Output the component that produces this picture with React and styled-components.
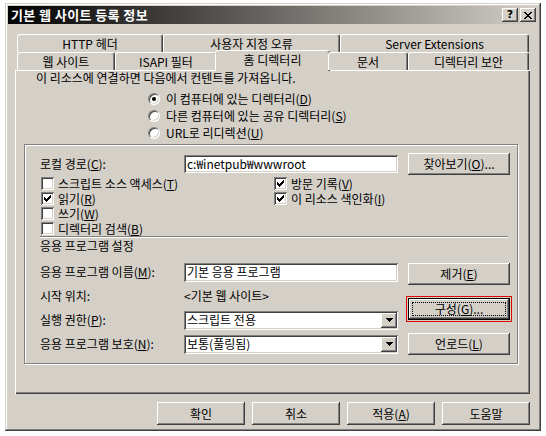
import React from "react";
import styled, { createGlobalStyle, css } from "styled-components";

const FACE = "#d4d0c8";

const GlobalStyle = createGlobalStyle`
  html, body {
    margin: 0;
    background: #fff;
  }
  body {
    font-family: "Noto Sans CJK KR", "Noto Sans", sans-serif;
    font-size: 12px;
    color: #000;
  }
`;

// classic 3d borders
const raised = css`
  box-shadow: inset -1px -1px #404040, inset 1px 1px #fff,
    inset -2px -2px #808080, inset 2px 2px ${FACE};
`;

const sunken = css`
  box-shadow: inset 1px 1px #808080, inset -1px -1px #fff,
    inset 2px 2px #404040, inset -2px -2px ${FACE};
`;

const Window = styled.div`
  margin: 3px 0 0 5px;
  width: 536px;
  height: 428px;
  box-sizing: border-box;
  padding: 3px;
  background: ${FACE};
  box-shadow: inset -1px -1px #404040, inset 1px 1px ${FACE},
    inset -2px -2px #808080, inset 2px 2px #fff;
  display: flex;
  flex-direction: column;
`;

const TitleBar = styled.div`
  height: 18px;
  display: flex;
  align-items: center;
  padding: 0 2px 0 3px;
  background: linear-gradient(90deg, #000 0%, #d4d0c8 100%);
`;

const Title = styled.div`
  flex: 1;
  color: #fff;
  font-weight: bold;
  font-size: 13px;
  line-height: 18px;
  letter-spacing: 0.4px;
`;

const CaptionButton = styled.div`
  width: 16px;
  height: 14px;
  box-sizing: border-box;
  background: ${FACE};
  ${raised};
  display: flex;
  align-items: center;
  justify-content: center;
  font-family: "DejaVu Sans", sans-serif;
  font-weight: bold;
  font-size: 11px;
  line-height: 14px;
  & + & {
    margin-left: 2px;
  }
`;

const Body = styled.div`
  flex: 1;
  padding: 10px 8px 0 7px;
  display: flex;
  flex-direction: column;
`;

const TabStrip = styled.div`
  padding-left: 2px;
  position: relative;
  z-index: 1;
`;

const TabRow = styled.div`
  display: flex;
  height: 18px;
`;

const Tab = styled.div`
  box-sizing: border-box;
  width: ${(p) => p.$w}px;
  height: 18px;
  background: ${FACE};
  border-top: 1px solid #fff;
  border-left: 1px solid #fff;
  border-right: 1px solid #404040;
  border-radius: 3px 3px 0 0;
  box-shadow: inset -1px 0 #808080;
  display: flex;
  align-items: center;
  justify-content: center;
  line-height: 14px;
  white-space: nowrap;
  overflow: hidden;
  ${(p) =>
    p.$active &&
    css`
      width: ${p.$w + 4}px;
      height: 21px;
      margin: -2px -2px 0;
      padding-bottom: 3px;
    `}
`;

const Panel = styled.div`
  height: 324px;
  box-sizing: border-box;
  padding-top: 1px;
  box-shadow: inset 1px 1px #fff, inset -1px -1px #404040,
    inset -2px -2px #808080;
`;

const Intro = styled.div`
  margin-left: 21px;
  line-height: 14px;
`;

const RadioList = styled.div`
  margin: 5px 0 0 133px;
`;

const RadioRow = styled.div`
  height: 17px;
  display: flex;
  align-items: center;
  gap: 6px;
  overflow: hidden;
`;

const Radio = styled.span`
  flex: none;
  width: 12px;
  height: 12px;
  box-sizing: border-box;
  border-radius: 50%;
  background: #fff;
  border: 1px solid;
  border-color: #808080 #fff #fff #808080;
  box-shadow: inset 1px 1px #404040, inset -1px -1px ${FACE};
  display: flex;
  align-items: center;
  justify-content: center;
  &::after {
    content: "";
    width: 4px;
    height: 4px;
    border-radius: 50%;
    background: ${(p) => (p.$on ? "#000" : "transparent")};
  }
`;

const Key = styled.u`
  text-underline-offset: 1px;
`;

const GroupBox = styled.div`
  margin: 3px 0 0 9px;
  width: 494px;
  height: 220px;
  box-sizing: border-box;
  border: 1px solid #808080;
  box-shadow: inset 1px 1px #fff, 1px 1px #fff;
  padding: 8px 0 0 15px;
`;

const PathRow = styled.div`
  display: grid;
  grid-template-columns: 144px 214px 102px;
  align-items: center;
  height: 22px;
`;

const Label = styled.span`
  line-height: 14px;
  white-space: nowrap;
`;

const Field = styled.div`
  height: ${(p) => p.$h || 18}px;
  box-sizing: border-box;
  background: #fff;
  ${sunken};
  padding: 0 3px;
  display: flex;
  align-items: center;
  line-height: 14px;
  white-space: nowrap;
  overflow: hidden;
`;

const Button = styled.div`
  width: ${(p) => p.$w || 102}px;
  height: ${(p) => p.$h || 22}px;
  box-sizing: border-box;
  background: ${FACE};
  ${raised};
  display: flex;
  align-items: center;
  justify-content: center;
  line-height: 14px;
  white-space: nowrap;
  margin-left: ${(p) => p.$ml || 0}px;
`;

const DefaultButton = styled(Button)`
  border: 1px solid #000;
  position: relative;
  &::before {
    content: "";
    position: absolute;
    inset: 3px;
    border: 1px dotted #000;
  }
`;

const Highlight = styled.div`
  margin: -2px;
  padding: 1px;
  border: 1px solid #e00000;
`;

const CheckGrid = styled.div`
  margin: 1px 0 0 1px;
  display: grid;
  grid-template-columns: 233px auto;
  grid-template-rows: repeat(4, 15px);
  grid-auto-flow: column;
`;

const CheckItem = styled.div`
  height: 15px;
  display: flex;
  align-items: center;
  gap: 4px;
  line-height: 14px;
  overflow: hidden;
`;

const CheckBoxFrame = styled.span`
  flex: none;
  width: 13px;
  height: 13px;
  box-sizing: border-box;
  background: #fff;
  ${sunken};
  display: flex;
  align-items: center;
  justify-content: center;
`;

const Separator = styled.div`
  width: 468px;
  border-top: 1px solid #808080;
  border-bottom: 1px solid #fff;
`;

const SectionTitle = styled.div`
  margin-top: 1px;
  line-height: 14px;
`;

const AppSection = styled.div`
  margin-top: 9px;
  display: flex;
`;

const AppGrid = styled.div`
  display: grid;
  grid-template-columns: 144px 214px;
  grid-auto-rows: 20px;
  row-gap: 4px;
  align-items: center;
`;

const ButtonColumn = styled.div`
  margin: 1px 0 0 10px;
  display: flex;
  flex-direction: column;
  gap: 13px;
`;

const SelectText = styled.span`
  flex: 1;
`;

const DropButton = styled.span`
  flex: none;
  width: 16px;
  height: 15px;
  margin-right: -1px;
  box-sizing: border-box;
  background: ${FACE};
  ${raised};
  display: flex;
  align-items: center;
  justify-content: center;
`;

const Footer = styled.div`
  margin-top: 8px;
  display: flex;
  justify-content: flex-end;
  gap: 7px;
`;

function CheckBox({ checked }) {
  return (
    <CheckBoxFrame>
      {checked && (
        <svg width="7" height="7" viewBox="0 0 7 7">
          <path
            d="M0 2h1v3h-1zM1 3h1v3h-1zM2 4h1v3h-1zM3 3h1v3h-1zM4 2h1v3h-1zM5 1h1v3h-1zM6 0h1v3h-1z"
            fill="#000"
          />
        </svg>
      )}
    </CheckBoxFrame>
  );
}

function Select({ children }) {
  return (
    <Field $h={19} style={{ paddingRight: 2 }}>
      <SelectText>{children}</SelectText>
      <DropButton>
        <svg width="7" height="4" viewBox="0 0 7 4">
          <path d="M0 0h7v1h-1v1h-1v1h-1v1h-1v-1h-1v-1h-1v-1h-1z" fill="#000" />
        </svg>
      </DropButton>
    </Field>
  );
}

const topTabs = [
  { label: "HTTP 헤더", w: 146 },
  { label: "사용자 지정 오류", w: 177 },
  { label: "Server Extensions", w: 189 },
];

const frontTabs = [
  { label: "웹 사이트", w: 98 },
  { label: "ISAPI 필터", w: 102 },
  { label: "홈 디렉터리", w: 111, active: true },
  { label: "문서", w: 80 },
  { label: "디렉터리 보안", w: 121 },
];

const checks = [
  { label: "스크립트 소스 액세스", key: "T" },
  { label: "읽기", key: "R", on: true },
  { label: "쓰기", key: "W" },
  { label: "디렉터리 검색", key: "B" },
  { label: "방문 기록", key: "V", on: true },
  { label: "이 리소스 색인화", key: "I", on: true },
];

export default function App() {
  return (
    <>
      <GlobalStyle />
      <Window>
        <TitleBar>
          <Title>기본 웹 사이트 등록 정보</Title>
          <CaptionButton>?</CaptionButton>
          <CaptionButton>
            <svg width="8" height="7" viewBox="0 0 8 7">
              <path
                d="M0 0h2v1h-2zM6 0h2v1h-2zM1 1h2v1h-2zM5 1h2v1h-2zM2 2h4v1h-4zM3 3h2v1h-2zM2 4h4v1h-4zM1 5h2v1h-2zM5 5h2v1h-2zM0 6h2v1h-2zM6 6h2v1h-2z"
                fill="#000"
              />
            </svg>
          </CaptionButton>
        </TitleBar>
        <Body>
          <TabStrip>
            <TabRow>
              {topTabs.map((t) => (
                <Tab key={t.label} $w={t.w}>
                  {t.label}
                </Tab>
              ))}
            </TabRow>
            <TabRow>
              {frontTabs.map((t) => (
                <Tab key={t.label} $w={t.w} $active={t.active}>
                  {t.label}
                </Tab>
              ))}
            </TabRow>
          </TabStrip>
          <Panel>
            <Intro>이 리소스에 연결하면 다음에서 컨텐트를 가져옵니다.</Intro>
            <RadioList>
              <RadioRow>
                <Radio $on />
                <span>
                  이 컴퓨터에 있는 디렉터리(<Key>D</Key>)
                </span>
              </RadioRow>
              <RadioRow>
                <Radio />
                <span>
                  다른 컴퓨터에 있는 공유 디렉터리(<Key>S</Key>)
                </span>
              </RadioRow>
              <RadioRow>
                <Radio />
                <span>
                  URL로 리디렉션(<Key>U</Key>)
                </span>
              </RadioRow>
            </RadioList>
            <GroupBox>
              <PathRow>
                <Label>
                  로컬 경로(<Key>C</Key>):
                </Label>
                <Field>c:₩inetpub₩wwwroot</Field>
                <Button $ml={10}>
                  찾아보기(<Key>O</Key>)...
                </Button>
              </PathRow>
              <CheckGrid>
                {checks.map((c) => (
                  <CheckItem key={c.key}>
                    <CheckBox checked={c.on} />
                    <span>
                      {c.label}(<Key>{c.key}</Key>)
                    </span>
                  </CheckItem>
                ))}
              </CheckGrid>
              <Separator />
              <SectionTitle>응용 프로그램 설정</SectionTitle>
              <AppSection>
                <AppGrid>
                  <Label>
                    응용 프로그램 이름(<Key>M</Key>):
                  </Label>
                  <Field $h={19}>기본 응용 프로그램</Field>
                  <Label>시작 위치:</Label>
                  <Label>{"<기본 웹 사이트>"}</Label>
                  <Label>
                    실행 권한(<Key>P</Key>):
                  </Label>
                  <Select>스크립트 전용</Select>
                  <Label>
                    응용 프로그램 보호(<Key>N</Key>):
                  </Label>
                  <Select>보통(풀링됨)</Select>
                </AppGrid>
                <ButtonColumn>
                  <Button>
                    제거(<Key>E</Key>)
                  </Button>
                  <Highlight>
                    <DefaultButton>
                      구성(<Key>G</Key>)...
                    </DefaultButton>
                  </Highlight>
                  <Button>
                    언로드(<Key>L</Key>)
                  </Button>
                </ButtonColumn>
              </AppSection>
            </GroupBox>
          </Panel>
          <Footer>
            <Button $w={88} $h={23}>
              확인
            </Button>
            <Button $w={88} $h={23}>
              취소
            </Button>
            <Button $w={88} $h={23}>
              적용(<Key>A</Key>)
            </Button>
            <Button $w={88} $h={23}>
              도움말
            </Button>
          </Footer>
        </Body>
      </Window>
    </>
  );
}
